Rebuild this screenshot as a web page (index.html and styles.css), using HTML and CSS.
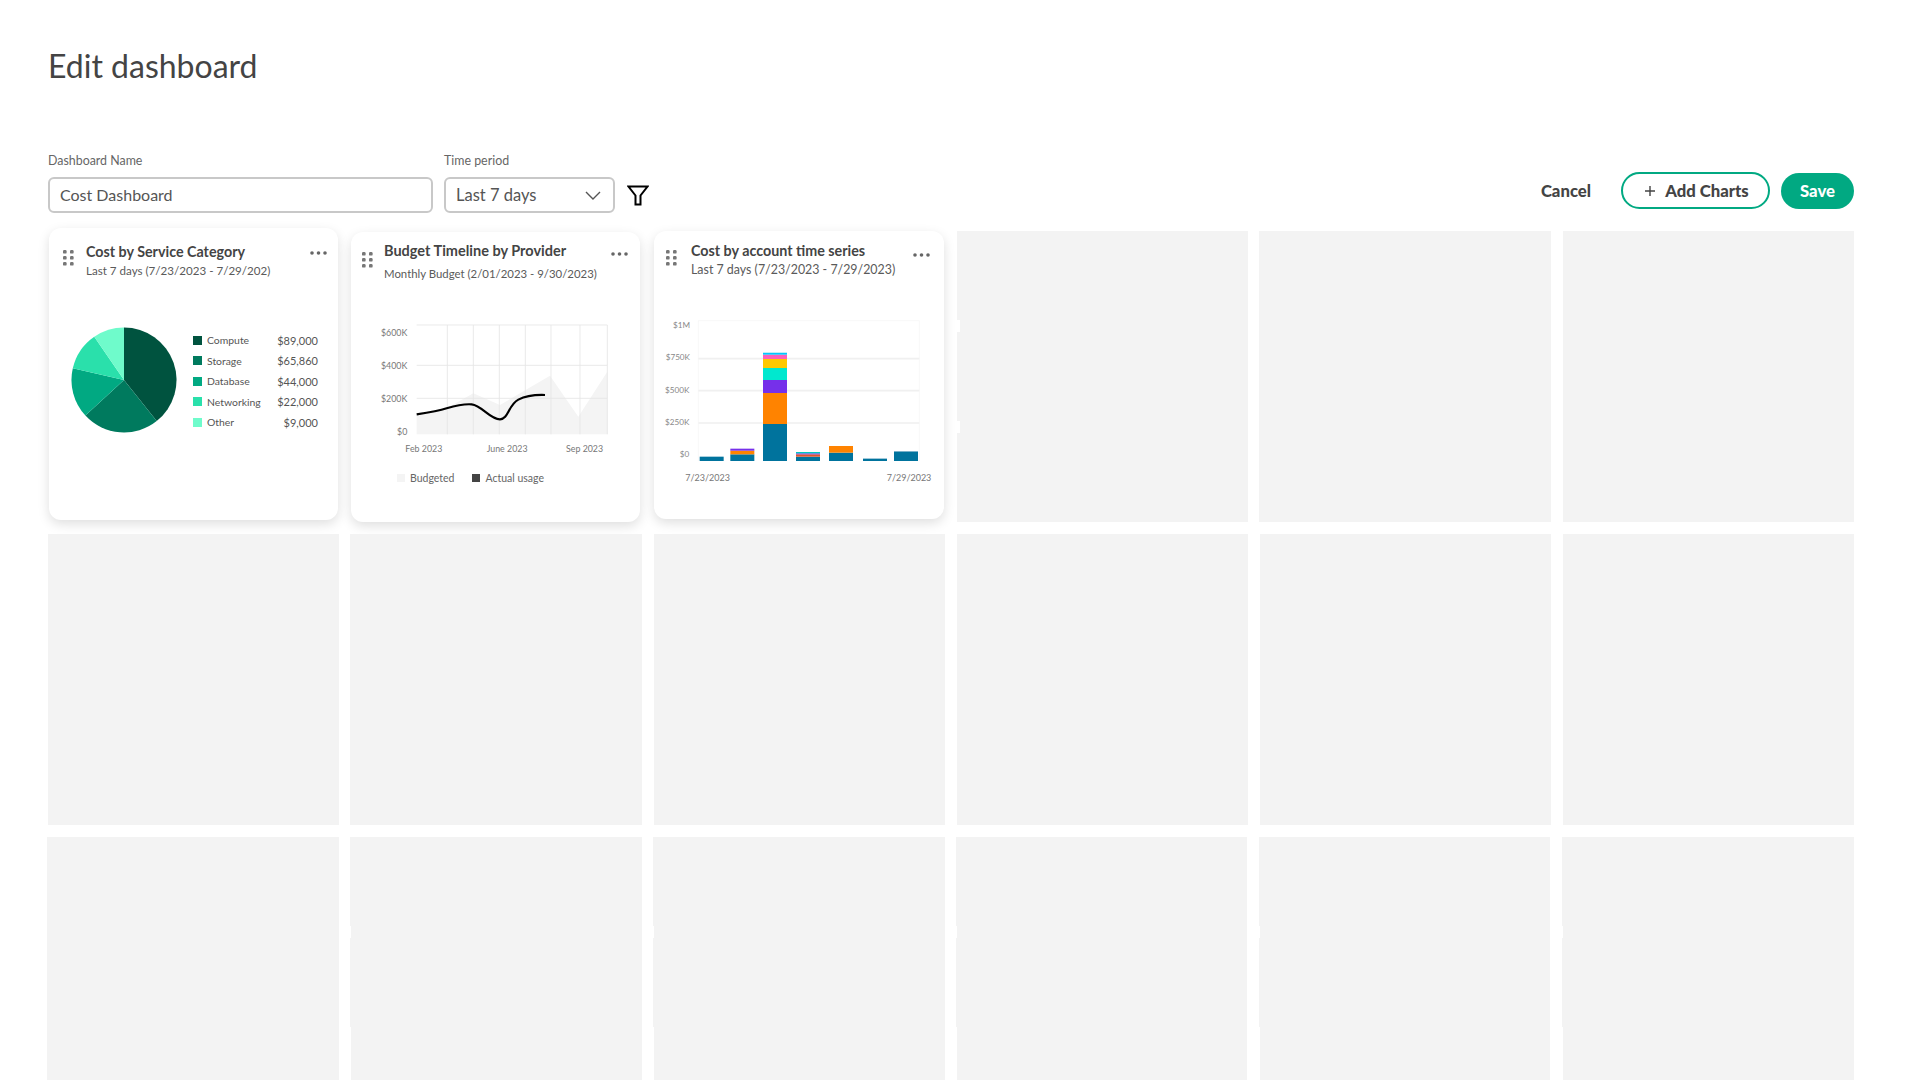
FILE: index.html
```html
<!DOCTYPE html>
<html lang="en">
<head>
<meta charset="utf-8">
<title>Edit dashboard</title>
<link rel="stylesheet" href="styles.css">
</head>
<body>
<main class="page">
  <h1 class="page-title">Edit dashboard</h1>
  <section class="toolbar">
    <div class="field field-name">
      <label class="field-label">Dashboard Name</label>
      <div class="control">Cost Dashboard</div>
    </div>
    <div class="field field-period">
      <label class="field-label">Time period</label>
      <div class="control control-select">Last 7 days
        <svg class="chevron" width="16" height="9" viewBox="0 0 16 9"><path d="M1 1l7 7 7-7" fill="none" stroke="#555" stroke-width="1.4"/></svg>
      </div>
    </div>
    <svg class="filter" width="22" height="21" viewBox="0 0 22 21"><path d="M1.5 1.5h19l-7 9v9h-5v-9z" fill="none" stroke="#000" stroke-width="2"/></svg>
    <div class="actions">
      <button class="btn btn-plain">Cancel</button>
      <button class="btn btn-outline">
        <svg width="10" height="10" viewBox="0 0 10 10"><path d="M5 0v10M0 5h10" stroke="#444" stroke-width="1.4"/></svg>
        Add Charts
      </button>
      <button class="btn btn-primary">Save</button>
    </div>
  </section>

  <section class="board">
    <div class="cell cell-card">
      <article class="card card-a">
        <svg class="grip" width="11" height="16" viewBox="0 0 11 16"><g fill="#777"><rect x="0" y="0" width="3.6" height="3.6" rx="1.2"/><rect x="7" y="0" width="3.6" height="3.6" rx="1.2"/><rect x="0" y="6" width="3.6" height="3.6" rx="1.2"/><rect x="7" y="6" width="3.6" height="3.6" rx="1.2"/><rect x="0" y="12" width="3.6" height="3.6" rx="1.2"/><rect x="7" y="12" width="3.6" height="3.6" rx="1.2"/></g></svg>
        <svg class="more" width="17" height="4" viewBox="0 0 17 4"><g fill="#666"><circle cx="2" cy="2" r="1.8"/><circle cx="8.5" cy="2" r="1.8"/><circle cx="15" cy="2" r="1.8"/></g></svg>
        <h2 class="card-title">Cost by Service Category</h2>
        <p class="card-sub">Last 7 days (7/23/2023 - 7/29/202)</p>
        <div class="pie-row">
          <svg class="pie" width="106" height="106" viewBox="-53 -53 106 106">
            <path d="M0 0L0 -52.5A52.5 52.5 0 0 1 32.7 41.1Z" fill="#00533f"/>
            <path d="M0 0L32.7 41.1A52.5 52.5 0 0 1 -38.6 35.6Z" fill="#007a5e"/>
            <path d="M0 0L-38.6 35.6A52.5 52.5 0 0 1 -51.2 -11.7Z" fill="#01a982"/>
            <path d="M0 0L-51.2 -11.7A52.5 52.5 0 0 1 -29.7 -43.3Z" fill="#2ae0ab"/>
            <path d="M0 0L-29.7 -43.3A52.5 52.5 0 0 1 0 -52.5Z" fill="#6ffbcb"/>
          </svg>
          <ul class="legend">
            <li class="legend-row"><i class="swatch sw-1"></i><span class="legend-name">Compute</span><span>$89,000</span></li>
            <li class="legend-row"><i class="swatch sw-2"></i><span class="legend-name">Storage</span><span>$65,860</span></li>
            <li class="legend-row"><i class="swatch sw-3"></i><span class="legend-name">Database</span><span>$44,000</span></li>
            <li class="legend-row"><i class="swatch sw-4"></i><span class="legend-name">Networking</span><span>$22,000</span></li>
            <li class="legend-row"><i class="swatch sw-5"></i><span class="legend-name">Other</span><span>$9,000</span></li>
          </ul>
        </div>
      </article>
    </div>

    <div class="cell cell-card">
      <article class="card card-b">
        <svg class="grip" width="11" height="16" viewBox="0 0 11 16"><g fill="#777"><rect x="0" y="0" width="3.6" height="3.6" rx="1.2"/><rect x="7" y="0" width="3.6" height="3.6" rx="1.2"/><rect x="0" y="6" width="3.6" height="3.6" rx="1.2"/><rect x="7" y="6" width="3.6" height="3.6" rx="1.2"/><rect x="0" y="12" width="3.6" height="3.6" rx="1.2"/><rect x="7" y="12" width="3.6" height="3.6" rx="1.2"/></g></svg>
        <svg class="more" width="17" height="4" viewBox="0 0 17 4"><g fill="#666"><circle cx="2" cy="2" r="1.8"/><circle cx="8.5" cy="2" r="1.8"/><circle cx="15" cy="2" r="1.8"/></g></svg>
        <h2 class="card-title">Budget Timeline by Provider</h2>
        <p class="card-sub">Monthly Budget (2/01/2023 - 9/30/2023)</p>
        <svg class="plot" width="289" height="134" viewBox="3 291 867 402">
          <path d="M200 570L290 550L370 505L450 540L600 452L685 575L772 440V628H200Z" fill="#f4f4f4"/>
          <g stroke="#e6e6e6" stroke-width="2.5" fill="none">
            <path d="M292 300V628M370 300V628M448 300V628M526 300V628M603 300V628M690 300V628M772 300V628"/>
            <path d="M200 300H772M200 421H772M200 520H772"/>
          </g>
          <path d="M200 568C240 562 265 558 290 550C320 541 340 536 365 538C395 541 420 583 450 583C475 583 475 540 505 524C530 511 555 509 585 510" fill="none" stroke="#000" stroke-width="6.5"/>
          <g class="axis" text-anchor="end">
            <text x="172" y="332">$600K</text>
            <text x="172" y="431">$400K</text>
            <text x="172" y="530">$200K</text>
            <text x="172" y="629">$0</text>
          </g>
          <g class="axis">
            <text x="166" y="680">Feb 2023</text>
            <text x="410" y="680">June 2023</text>
            <text x="648" y="680">Sep 2023</text>
          </g>
        </svg>
        <div class="plot-legend">
          <span class="plot-key"><i class="key key-light"></i>Budgeted</span>
          <span class="plot-key"><i class="key key-dark"></i>Actual usage</span>
        </div>
      </article>
    </div>

    <div class="cell cell-card">
      <article class="card card-c">
        <svg class="grip" width="11" height="16" viewBox="0 0 11 16"><g fill="#777"><rect x="0" y="0" width="3.6" height="3.6" rx="1.2"/><rect x="7" y="0" width="3.6" height="3.6" rx="1.2"/><rect x="0" y="6" width="3.6" height="3.6" rx="1.2"/><rect x="7" y="6" width="3.6" height="3.6" rx="1.2"/><rect x="0" y="12" width="3.6" height="3.6" rx="1.2"/><rect x="7" y="12" width="3.6" height="3.6" rx="1.2"/></g></svg>
        <svg class="more" width="17" height="4" viewBox="0 0 17 4"><g fill="#666"><circle cx="2" cy="2" r="1.8"/><circle cx="8.5" cy="2" r="1.8"/><circle cx="15" cy="2" r="1.8"/></g></svg>
        <h2 class="card-title">Cost by account time series</h2>
        <p class="card-sub">Last 7 days (7/23/2023 - 7/29/2023)</p>
        <svg class="plot" width="290" height="165" viewBox="-18 285 870 495">
          <g stroke="#f0f0f0" fill="none">
            <path d="M115 287H778M115 287V708M778 287V708" stroke-width="1.5"/>
            <path d="M115 401H778M115 497H778M115 594H778" stroke-width="5"/>
          </g>
          <g>
            <rect x="119" y="695" width="72" height="13" fill="#00739d"/>
            <rect x="211" y="688" width="72" height="20" fill="#00739d"/>
            <rect x="211" y="677" width="72" height="11" fill="#ff8300"/>
            <rect x="211" y="671" width="72" height="6" fill="#7630ea"/>
            <rect x="309" y="597" width="72" height="111" fill="#00739d"/>
            <rect x="309" y="504" width="72" height="93" fill="#ff8300"/>
            <rect x="309" y="465" width="72" height="39" fill="#7630ea"/>
            <rect x="309" y="429" width="72" height="36" fill="#00e8cf"/>
            <rect x="309" y="402" width="72" height="27" fill="#fec901"/>
            <rect x="309" y="389" width="72" height="13" fill="#fc61b8"/>
            <rect x="309" y="384" width="72" height="5" fill="#00c8ff"/>
            <rect x="309" y="381" width="72" height="3" fill="#bfeff5"/>
            <rect x="408" y="695" width="72" height="13" fill="#00739d"/>
            <rect x="408" y="688" width="72" height="7" fill="#e0562a"/>
            <rect x="408" y="685" width="72" height="3" fill="#7630ea"/>
            <rect x="408" y="681" width="72" height="4" fill="#00c8c0"/>
            <rect x="507" y="683" width="72" height="25" fill="#00739d"/>
            <rect x="507" y="663" width="72" height="20" fill="#ff8300"/>
            <rect x="609" y="701" width="72" height="7" fill="#00739d"/>
            <rect x="609" y="699" width="72" height="2" fill="#9cc7d8"/>
            <rect x="702" y="680" width="72" height="28" fill="#00739d"/>
            <rect x="702" y="678" width="72" height="2" fill="#5fa3bf"/>
          </g>
          <g class="axis axis-small" text-anchor="end">
            <text x="90" y="309">$1M</text>
            <text x="90" y="405">$750K</text>
            <text x="88" y="503">$500K</text>
            <text x="88" y="599">$250K</text>
            <text x="88" y="695">$0</text>
          </g>
          <g class="axis axis-dates">
            <text x="76" y="767">7/23/2023</text>
            <text x="680" y="767">7/29/2023</text>
          </g>
        </svg>
      </article>
    </div>

    <div class="cell cell-notched"></div><div class="cell cell-shift"></div><div class="cell"></div>
    <div class="cell"></div><div class="cell cell-shift"></div><div class="cell"></div><div class="cell"></div><div class="cell"></div><div class="cell"></div>
    <div class="cell cell-shift"></div><div class="cell row3"></div><div class="cell row3"></div><div class="cell row3 row3-narrow"></div><div class="cell row3 row3-narrow"></div><div class="cell row3"></div>
  </section>
</main>
</body>
</html>
```
FILE: styles.css
```css
* { box-sizing: border-box; }
html, body { margin: 0; height: 1080px; overflow: hidden; background: #fff; }
body { font-family: Lato, "Noto Sans", sans-serif; color: #444; }

.page { padding: 46px 66px 0 48px; }
.page-title { margin: 0; font-size: 32px; line-height: 40px; font-weight: 400; color: #444; }

.toolbar { display: flex; align-items: flex-end; margin-top: 66px; }
.field-name { width: 385px; }
.field-period { width: 171px; margin-left: 11px; }
.field-label { display: block; font-size: 12.4px; line-height: 18px; margin-bottom: 7px; color: #666; }
.control { height: 36px; border: 2px solid #c8c8c8; border-radius: 6px; padding: 0 10px; font-size: 16px; line-height: 31px; color: #555; }
.control-select { display: flex; align-items: center; justify-content: space-between; padding-right: 12px; font-size: 16.5px; }
.filter { margin: 0 0 7px 12px; }
.actions { margin: 0 0 4px auto; display: flex; align-items: center; }
.btn { font: 900 16.7px/1 Lato, "Noto Sans", sans-serif; color: #444; background: none; border: 0; padding: 1px 0 0; }
.btn-plain { margin-right: 30px; padding-top: 2px; }
.btn-outline { width: 149px; height: 37px; border: 2px solid #01a982; border-radius: 19px; display: flex; align-items: center; justify-content: center; gap: 10px; padding-left: 3px; margin-right: 11px; }
.btn-primary { width: 73px; height: 36px; border-radius: 18px; background: #01a982; color: #fff; }

.board { display: grid; grid-template-columns: repeat(6, 291px); grid-auto-rows: 291px; gap: 12px; margin-top: 18px; }
.cell { background: #f3f3f3; position: relative; }
.cell-card { background: transparent; }
.cell-shift { margin-left: -1px; }
.cell-notched::before { content: ""; position: absolute; left: 0; top: 89px; width: 3px; height: 12px; background: #fff; box-shadow: 0 101px 0 #fff; }
.row3 { margin-left: -1px; }
.row3-narrow { margin-right: 1px; }
.row3::before, .row3::after { content: ""; position: absolute; left: 0; width: 1px; background: #fff; }
.row3::before { top: 89px; height: 12px; }
.row3::after { top: 190px; bottom: 0; }

.card { position: absolute; background: #fff; border-radius: 12px; box-shadow: 0 4px 12px rgba(0,0,0,.13); }
.card-a { left: 1px; top: -3px; width: 289px; height: 292px; padding: 14px 0 0 37px; }
.card-b { left: 0; top: 1px; width: 289px; height: 290px; padding: 9px 0 0 33px; }
.card-c { left: 0; top: 0; width: 290px; height: 288px; padding: 10px 0 0 37px; }

.grip, .more { position: absolute; }
.card-a .grip { left: 14px; top: 22px; }
.card-a .more { left: 261px; top: 23px; }
.card-b .grip { left: 11px; top: 20px; }
.card-b .more { left: 260px; top: 20px; }
.card-c .grip { left: 12px; top: 19px; }
.card-c .more { left: 259px; top: 22px; }

.card-title { margin: 0; font-size: 14.3px; line-height: 20px; font-weight: 700; color: #444; }
.card-sub { margin: -1px 0 0; font-size: 11.6px; line-height: 19px; color: #5a5a5a; }
.card-b .card-title { font-size: 14.5px; }
.card-b .card-sub { margin: 3px 0 0; line-height: 20px; font-size: 11.4px; }
.card-c .card-sub { margin: -1px 0 0; font-size: 12.4px; }

.pie-row { display: flex; align-items: center; margin: 47px 0 0 -15px; }
.pie { flex: none; }
.legend { list-style: none; margin: 2px 0 0 16px; padding: 0; width: 125px; font-size: 11px; color: #555; }
.legend-row { display: grid; grid-template-columns: 9px 1fr auto; column-gap: 5px; align-items: center; height: 20.5px; }
.legend-name { font-size: 10.4px; }
.swatch { width: 9px; height: 9px; display: block; }
.sw-1 { background: #00533f; }
.sw-2 { background: #007a5e; }
.sw-3 { background: #01a982; }
.sw-4 { background: #2ae0ab; }
.sw-5 { background: #6ffbcb; }

.plot { display: block; }
.card-b .plot { margin: 38px 0 0 -33px; }
.card-c .plot { margin: 41px 0 0 -37px; }
.axis { font-size: 26.5px; fill: #777; }
.axis-small { font-size: 24.5px; fill: #888; }
.axis-dates { font-size: 27px; }

.plot-legend { display: flex; gap: 18px; margin: 15px 0 0 13px; font-size: 10.5px; line-height: 14px; color: #666; }
.plot-key { display: flex; align-items: center; gap: 5px; }
.key { width: 8px; height: 8px; display: block; }
.key-light { background: #f4f4f4; }
.key-dark { background: #444; }
```
